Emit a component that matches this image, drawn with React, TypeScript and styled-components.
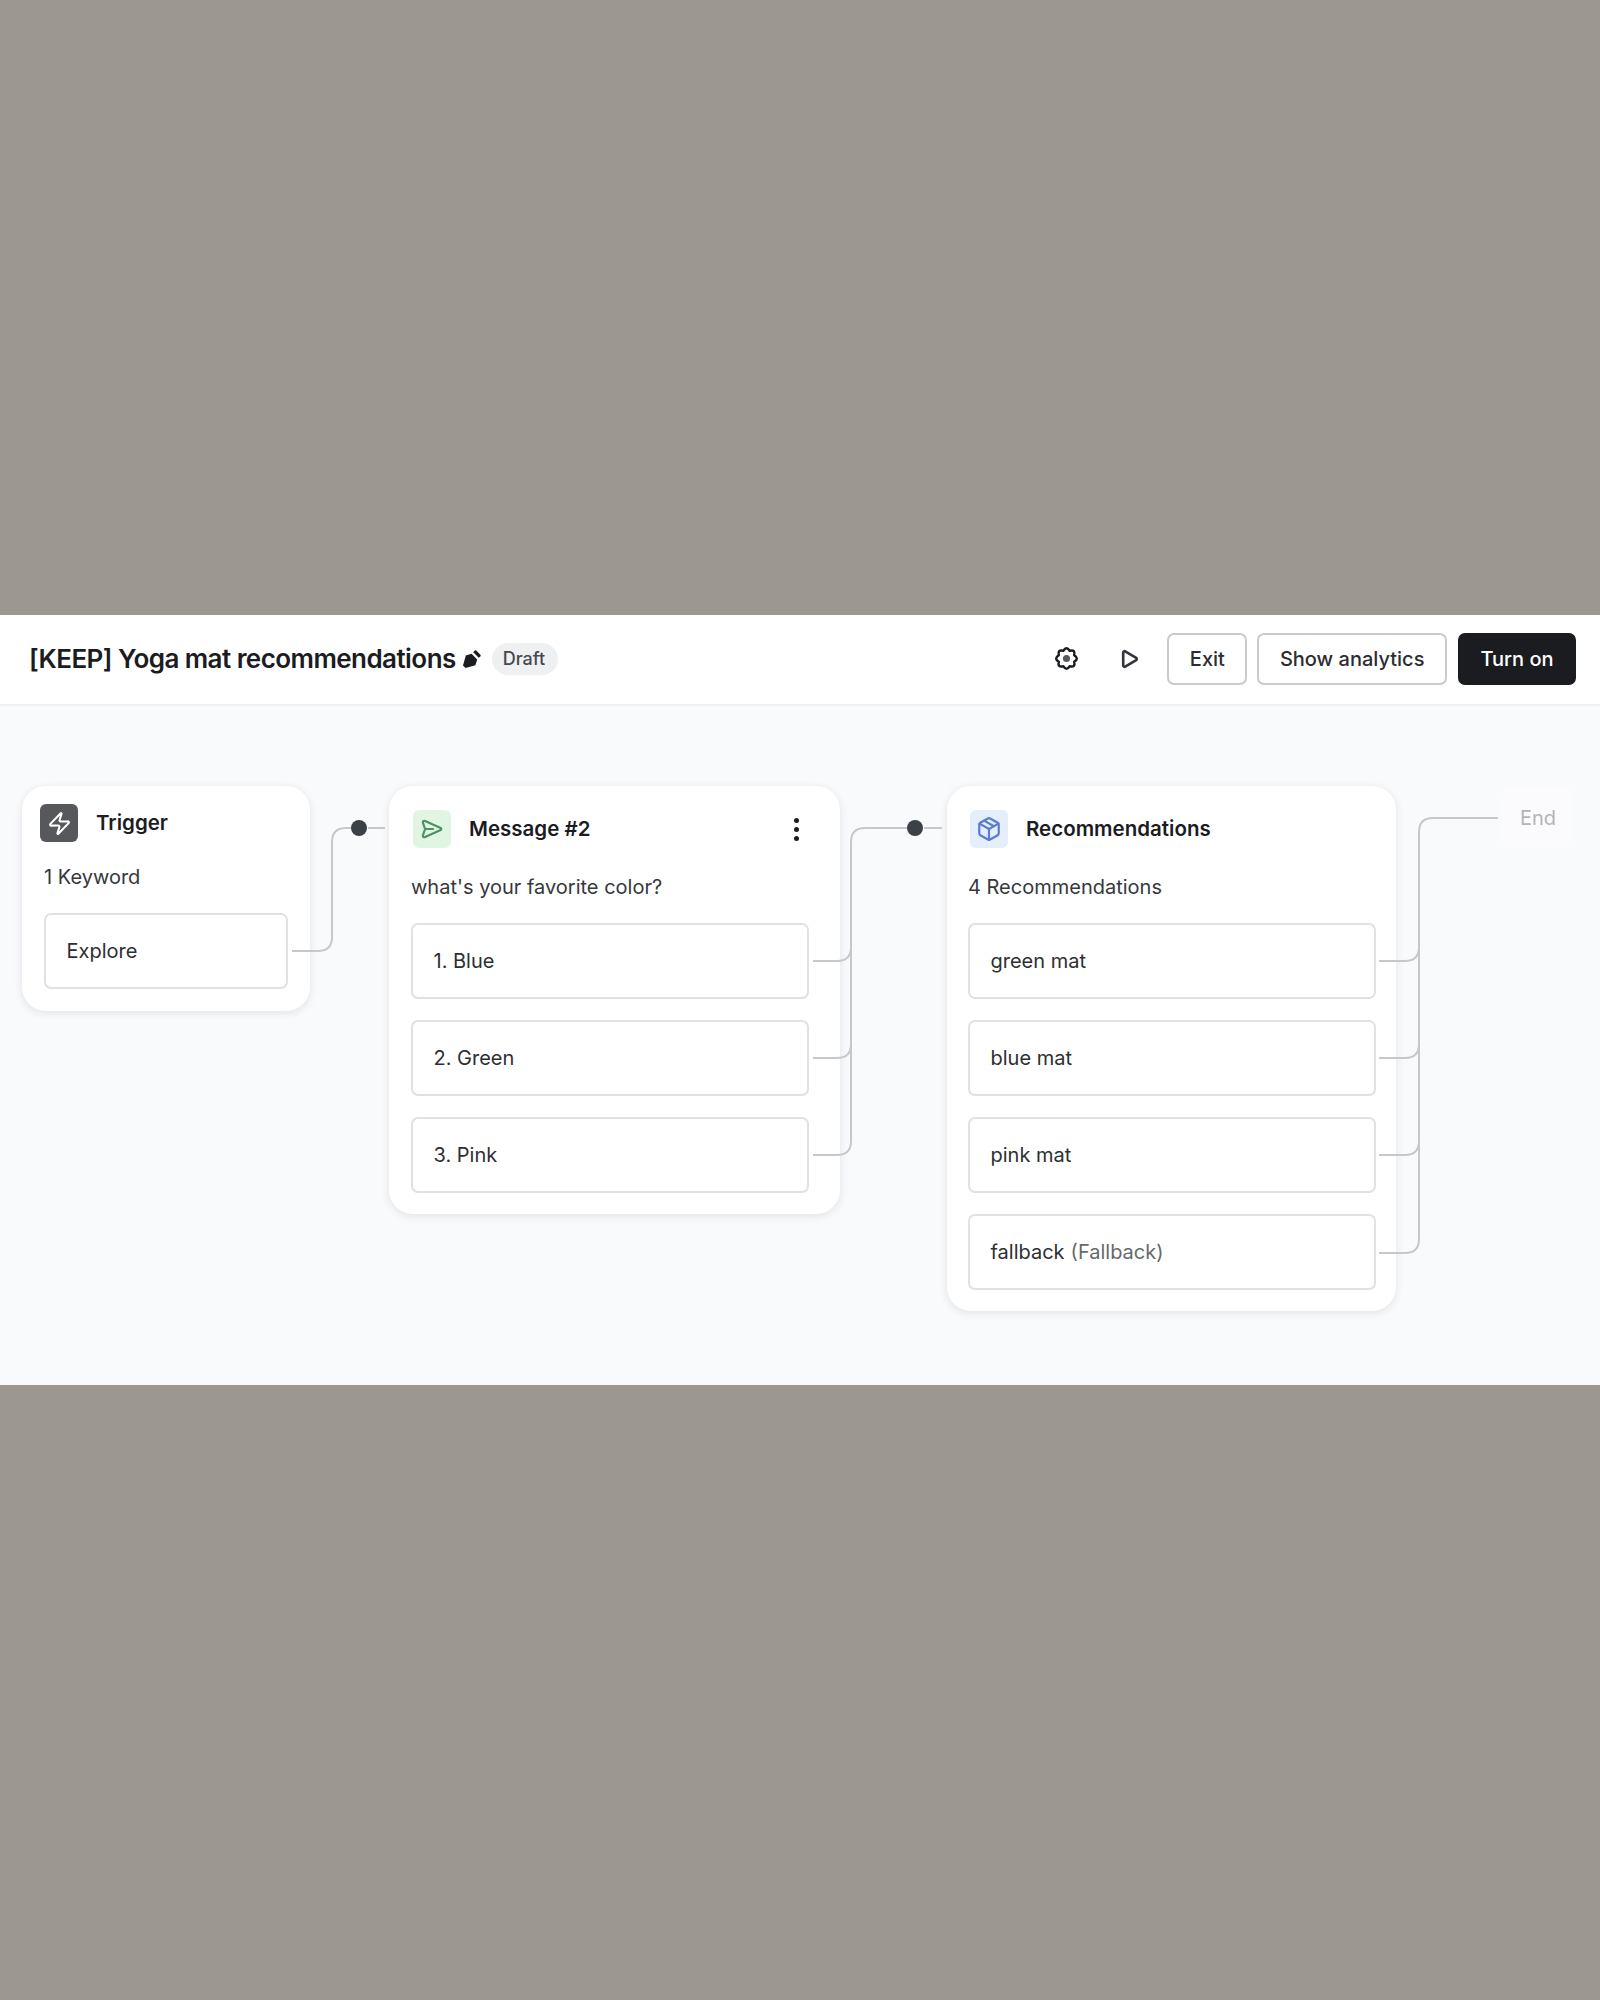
import React from "react";
import styled, { createGlobalStyle } from "styled-components";
import { Zap, Package } from "lucide-react";

const GlobalStyle = createGlobalStyle`
  html, body {
    margin: 0;
    padding: 0;
  }
  body {
    background: #9c9890;
    font-family: "Inter", "Liberation Sans", sans-serif;
    color: #1d1f22;
  }
`;

const Page = styled.div`
  height: 2000px;
  display: flex;
  flex-direction: column;
  justify-content: center;
`;

const Screen = styled.div`
  height: 770px;
  display: flex;
  flex-direction: column;
  background: #f9fafc;
`;

const Header = styled.header`
  height: 91px;
  box-sizing: border-box;
  flex: none;
  background: #fff;
  border-bottom: 2px solid #f0f1f3;
  padding: 0 24px 2px 29px;
  display: flex;
  align-items: center;
`;

const Title = styled.h1`
  margin: 0;
  font-size: 26px;
  font-weight: 600;
  letter-spacing: -0.55px;
  color: #1b1c1f;
`;

const PencilIcon = styled.svg`
  width: 20px;
  height: 20px;
  margin-left: 6px;
  color: #1b1c1f;
`;

const DraftPill = styled.span`
  margin-left: 10px;
  height: 32px;
  padding: 0 13px 0 11px;
  display: flex;
  align-items: center;
  border-radius: 16px;
  background: #eff0f2;
  color: #45484d;
  font-size: 18px;
  font-weight: 500;
`;

const Actions = styled.div`
  margin-left: auto;
  display: flex;
  align-items: center;
`;

const IconGroup = styled.div`
  display: flex;
  margin-right: -5px;
`;

const IconButton = styled.button`
  width: 64px;
  height: 52px;
  border: none;
  background: none;
  padding: 0;
  display: flex;
  align-items: center;
  justify-content: center;
  color: #1b1c1f;
`;

const Button = styled.button<{ $primary?: boolean }>`
  height: 52px;
  box-sizing: border-box;
  padding: 0 20.5px;
  margin-left: ${(p) => (p.$primary ? 11 : 10)}px;
  border-radius: 7px;
  border: 2px solid ${(p) => (p.$primary ? "#1b1c1f" : "#c9cacc")};
  background: ${(p) => (p.$primary ? "#1b1c1f" : "#fff")};
  color: ${(p) => (p.$primary ? "#fff" : "#2b2d31")};
  font-family: inherit;
  font-size: 20px;
  font-weight: 500;
`;

const Canvas = styled.main`
  position: relative;
  flex: 1;
  display: flex;
  align-items: flex-start;
  padding: 80px 0 0 22px;
`;

const Wires = styled.svg`
  position: absolute;
  inset: 0;
  width: 100%;
  height: 100%;
  pointer-events: none;
`;

const Card = styled.section<{ $width: number; $gap: number; $pad: string }>`
  width: ${(p) => p.$width}px;
  margin-right: ${(p) => p.$gap}px;
  flex: none;
  box-sizing: border-box;
  padding: ${(p) => p.$pad};
  background: #fff;
  border-radius: 24px;
  box-shadow: 0 2px 9px rgba(30, 35, 50, 0.11);
`;

const CardHead = styled.div<{ $shift: number }>`
  display: flex;
  align-items: center;
  height: 38px;
  margin-left: ${(p) => p.$shift}px;
`;

const Tile = styled.div<{ $bg: string; $fg: string; $head: number }>`
  width: 38px;
  height: 38px;
  flex: none;
  margin-right: ${(p) => p.$head}px;
  border-radius: 6px;
  background: ${(p) => p.$bg};
  color: ${(p) => p.$fg};
  display: flex;
  align-items: center;
  justify-content: center;
`;

const CardTitle = styled.h2`
  margin: -1px 0 0;
  font-size: 20.5px;
  font-weight: 600;
  color: #1b1c1f;
`;

const Dots = styled.span`
  margin-left: auto;
  margin-right: 10px;
  display: flex;
  flex-direction: column;
  gap: 4px;
`;

const Dot = styled.i`
  width: 5px;
  height: 5px;
  border-radius: 50%;
  background: #1b1c1f;
`;

const Summary = styled.p<{ $top: number }>`
  margin: ${(p) => p.$top}px 0 0;
  height: 24px;
  line-height: 24px;
  font-size: 20px;
  color: #35383d;
`;

const Options = styled.div<{ $top: number }>`
  margin-top: ${(p) => p.$top}px;
  display: flex;
  flex-direction: column;
  gap: 21px;
`;

const Option = styled.div`
  height: 76px;
  box-sizing: border-box;
  padding: 0 20.5px;
  display: flex;
  align-items: center;
  gap: 6px;
  border: 2px solid #e0e1e3;
  border-radius: 7px;
  font-size: 20px;
  color: #2d2f33;
`;

const Muted = styled.span`
  color: #66696e;
`;

const EndNode = styled.div`
  flex: none;
  margin: 2px 0 0 106px;
  width: 70px;
  height: 60px;
  box-sizing: border-box;
  padding-left: 18px;
  display: flex;
  align-items: center;
  border-radius: 8px;
  background: #fbfbfd;
  color: #b3b5b9;
  font-size: 20px;
`;

const App: React.FC = () => {
  return (
    <Page>
      <GlobalStyle />
      <Screen>
        <Header>
          <Title>[KEEP] Yoga mat recommendations</Title>
          <PencilIcon viewBox="0 0 20 20" fill="currentColor">
            <path d="M12.8 1.6a1 1 0 0 1 1.4 0l4.2 4.2a1 1 0 0 1 0 1.4l-1.6 1.6-5.6-5.6Z" />
            <path d="M9.6 4.8 15.2 10.4 13.4 16.2 3.6 19 1 16.4 3.8 6.6Z" />
          </PencilIcon>
          <DraftPill>Draft</DraftPill>
          <Actions>
            <IconGroup>
              <IconButton>
                <svg width="25" height="25" viewBox="0 0 24 24" fill="none" stroke="currentColor" strokeWidth="2.4" strokeLinejoin="round">
                  <path d="M19.4 8.9Q24.5 12 19.4 15.1Q20.8 20.8 15.1 19.4Q12 24.5 8.9 19.4Q3.2 20.8 4.6 15.1Q-.5 12 4.6 8.9Q3.2 3.2 8.9 4.6Q12 -.5 15.1 4.6Q20.8 3.2 19.4 8.9Z" />
                  <circle cx="12" cy="12" r="3.4" fill="#55585c" stroke="none" />
                </svg>
              </IconButton>
              <IconButton>
                <svg width="24" height="24" viewBox="0 0 24 24" fill="none" stroke="#33353a" strokeWidth="2.6" strokeLinejoin="round">
                  <path d="M5.2 5.5v13a1.3 1.3 0 0 0 2 1.1l11-6.5a1.3 1.3 0 0 0 0-2.2l-11-6.5a1.3 1.3 0 0 0-2 1.1Z" />
                </svg>
              </IconButton>
            </IconGroup>
            <Button>Exit</Button>
            <Button>Show analytics</Button>
            <Button $primary>Turn on</Button>
          </Actions>
        </Header>
        <Canvas>
          <Card $width={288} $gap={79} $pad="18px 22px 22px 22px">
            <CardHead $shift={-4}>
              <Tile $bg="#56585b" $fg="#fff" $head={18}>
                <Zap size={25} strokeWidth={2} />
              </Tile>
              <CardTitle>Trigger</CardTitle>
            </CardHead>
            <Summary $top={23}>1 Keyword</Summary>
            <Options $top={24}>
              <Option>Explore</Option>
            </Options>
          </Card>
          <Card $width={451} $gap={107} $pad="24px 31px 21px 22px">
            <CardHead $shift={2}>
              <Tile $bg="#e0f6e3" $fg="#4a9163" $head={18}>
                <svg width="26" height="26" viewBox="0 0 24 24" fill="none" stroke="currentColor" strokeWidth="2" strokeLinejoin="round" strokeLinecap="round">
                  <path d="M5.6 4.6 20 11.1a1 1 0 0 1 0 1.8L5.6 19.4c-1.3.6-2.4-.4-2-1.6L5.6 12 3.6 6.2c-.4-1.2.7-2.2 2-1.6Z" />
                  <path d="M5.6 12H13" />
                </svg>
              </Tile>
              <CardTitle>Message #2</CardTitle>
              <Dots>
                <Dot />
                <Dot />
                <Dot />
              </Dots>
            </CardHead>
            <Summary $top={27}>what's your favorite color?</Summary>
            <Options $top={24}>
              <Option>1. Blue</Option>
              <Option>2. Green</Option>
              <Option>3. Pink</Option>
            </Options>
          </Card>
          <Card $width={449} $gap={0} $pad="24px 20px 21px 21px">
            <CardHead $shift={2}>
              <Tile $bg="#e5eefc" $fg="#5a7bd0" $head={18}>
                <Package size={26} strokeWidth={2} />
              </Tile>
              <CardTitle>Recommendations</CardTitle>
            </CardHead>
            <Summary $top={27}>4 Recommendations</Summary>
            <Options $top={24}>
              <Option>green mat</Option>
              <Option>blue mat</Option>
              <Option>pink mat</Option>
              <Option>
                fallback <Muted>(Fallback)</Muted>
              </Option>
            </Options>
          </Card>
          <EndNode>End</EndNode>
          <Wires fill="none" stroke="#c6c8cb" strokeWidth="2">
            <path d="M292 245H318Q332 245 332 231V136Q332 122 346 122H359" />
            <path d="M368 122H385" />
            <circle cx="359" cy="122" r="8" fill="#3c4047" stroke="none" />
            <path d="M813 449H837Q851 449 851 435V136Q851 122 865 122H915" />
            <path d="M813 255H837Q851 255 851 241" />
            <path d="M813 352H837Q851 352 851 338" />
            <path d="M924 122H942" />
            <circle cx="915" cy="122" r="8" fill="#3c4047" stroke="none" />
            <path d="M1379 547H1405Q1419 547 1419 533V126Q1419 112 1433 112H1498" />
            <path d="M1379 255H1405Q1419 255 1419 241" />
            <path d="M1379 352H1405Q1419 352 1419 338" />
            <path d="M1379 449H1405Q1419 449 1419 435" />
          </Wires>
        </Canvas>
      </Screen>
    </Page>
  );
};

export default App;
